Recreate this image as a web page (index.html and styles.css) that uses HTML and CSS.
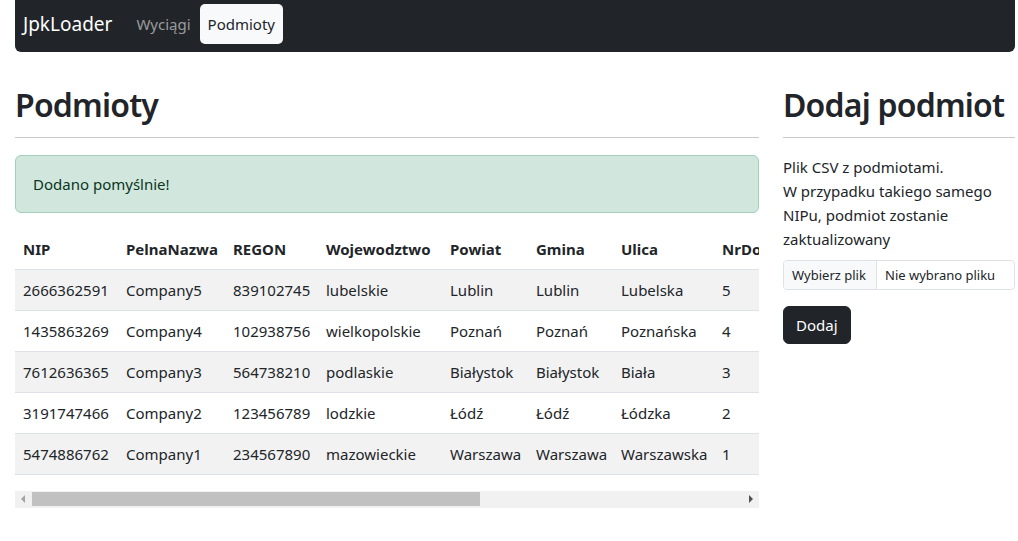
FILE: index.html
```html
<!DOCTYPE html>
<html lang="pl">
<head>
<meta charset="utf-8">
<title>JpkLoader - Podmioty</title>
<link rel="stylesheet" href="styles.css">
</head>
<body>
<div class="page">
  <nav class="navbar">
    <a class="brand" href="#">JpkLoader</a>
    <ul class="nav">
      <li><a class="nav-link" href="#">Wyciągi</a></li>
      <li><a class="nav-link active" href="#">Podmioty</a></li>
    </ul>
  </nav>
  <div class="row">
    <main class="col-main">
      <h1 class="title">Podmioty</h1>
      <hr class="rule">
      <div class="alert">Dodano pomyślnie!</div>
      <div class="table-responsive">
        <table class="table">
          <thead>
            <tr><th>NIP</th><th>PelnaNazwa</th><th>REGON</th><th>Wojewodztwo</th><th>Powiat</th><th>Gmina</th><th>Ulica</th><th>NrDomu</th></tr>
          </thead>
          <tbody>
            <tr><td>2666362591</td><td>Company5</td><td>839102745</td><td>lubelskie</td><td>Lublin</td><td>Lublin</td><td>Lubelska</td><td>5</td></tr>
            <tr><td>1435863269</td><td>Company4</td><td>102938756</td><td>wielkopolskie</td><td>Poznań</td><td>Poznań</td><td>Poznańska</td><td>4</td></tr>
            <tr><td>7612636365</td><td>Company3</td><td>564738210</td><td>podlaskie</td><td>Białystok</td><td>Białystok</td><td>Biała</td><td>3</td></tr>
            <tr><td>3191747466</td><td>Company2</td><td>123456789</td><td>lodzkie</td><td>Łódź</td><td>Łódź</td><td>Łódzka</td><td>2</td></tr>
            <tr><td>5474886762</td><td>Company1</td><td>234567890</td><td>mazowieckie</td><td>Warszawa</td><td>Warszawa</td><td>Warszawska</td><td>1</td></tr>
          </tbody>
        </table>
      </div>
      <div class="hscroll">
        <span class="arrow arrow-left"></span>
        <span class="track"><span class="thumb"></span></span>
        <span class="arrow arrow-right"></span>
      </div>
    </main>
    <aside class="col-side">
      <h1 class="title">Dodaj podmiot</h1>
      <hr class="rule">
      <p class="help">Plik CSV z podmiotami.<br>W przypadku takiego samego NIPu, podmiot zostanie zaktualizowany</p>
      <div class="file-input">
        <span class="file-btn">Wybierz plik</span>
        <span class="file-name">Nie wybrano pliku</span>
      </div>
      <button class="btn-dark" type="button">Dodaj</button>
    </aside>
  </div>
</div>
</body>
</html>
```
FILE: styles.css
```css
* { box-sizing: border-box; }
html, body { margin: 0; padding: 0; }
body {
  font-family: "Noto Sans", "Open Sans", sans-serif;
  font-size: 15px;
  line-height: 24px;
  color: #212529;
  background: #fff;
}
.page {
  width: 1000px;
  margin-left: 15px;
}
.navbar {
  display: flex;
  align-items: center;
  height: 52px;
  padding: 0 8px 4px 8px;
  background: #212529;
  border-radius: 0 0 6px 6px;
}
.brand {
  color: #fff;
  text-decoration: none;
  font-size: 19px;
  line-height: 30px;
  margin-right: 16px;
}
.nav {
  display: flex;
  list-style: none;
  margin: 0;
  padding: 0;
}
.nav-link {
  display: block;
  padding: 8px 8px;
  color: rgba(255,255,255,0.55);
  text-decoration: none;
  border-radius: 5px;
}
.nav-link.active {
  background: #f8f9fa;
  color: #212529;
  margin-left: 1px;
}
.row {
  display: flex;
  gap: 24px;
  margin-top: 31px;
}
.col-main { width: 744px; min-width: 0; }
.col-side { width: 232px; }
.title {
  margin: 0 0 10px 0;
  font-size: 32px;
  font-weight: 600;
  letter-spacing: -0.8px;
  line-height: 44px;
  white-space: nowrap;
}
.rule {
  margin: 0 0 17px 0;
  border: 0;
  border-top: 1px solid #c8c9ca;
}
.alert {
  padding: 16px 17px;
  background: #d1e7dd;
  border: 1px solid #a3cfbb;
  color: #0a3622;
  border-radius: 6px;
  margin-bottom: 16px;
}
.table-responsive { overflow: hidden; }
.table {
  width: 800px;
  table-layout: fixed;
  border-collapse: collapse;
  margin-bottom: 16px;
}
.table th, .table td {
  padding: 8px 8px;
  text-align: left;
  white-space: nowrap;
  border-bottom: 1px solid #dee2e6;
}
.table th { font-weight: 700; }
.table tbody tr:nth-child(odd) { background: #f2f2f2; }
.table th:nth-child(1) { width: 103px; }
.table th:nth-child(2) { width: 107px; }
.table th:nth-child(3) { width: 93px; }
.table th:nth-child(4) { width: 124px; }
.table th:nth-child(5) { width: 86px; }
.table th:nth-child(6) { width: 85px; }
.table th:nth-child(7) { width: 101px; }
.table th:nth-child(8) { width: 101px; }
.hscroll {
  display: flex;
  height: 17px;
  background: #f1f1f1;
}
.arrow {
  width: 17px;
  flex: none;
  position: relative;
}
.arrow::after {
  content: "";
  position: absolute;
  top: 4px;
  width: 0;
  height: 0;
  border-top: 4px solid transparent;
  border-bottom: 4px solid transparent;
}
.arrow-left::after {
  left: 6px;
  border-right: 4px solid #a3a3a3;
}
.arrow-right::after {
  left: 7px;
  border-left: 4px solid #505050;
}
.track {
  flex: 1;
  padding: 1px 0 2px 0;
  display: flex;
}
.thumb {
  width: 448px;
  background: #c1c1c1;
}
.help {
  margin: 0 0 9px 0;
}
.file-input {
  display: flex;
  height: 30px;
  border: 1px solid #dee2e6;
  border-radius: 4px;
  font-size: 13px;
  line-height: 20px;
  overflow: hidden;
  margin-bottom: 16px;
}
.file-btn {
  width: 93px;
  padding: 4px 8px;
  background: #f8f9fa;
  border-right: 1px solid #dee2e6;
  white-space: nowrap;
}
.file-name {
  padding: 4px 8px;
  white-space: nowrap;
}
.btn-dark {
  font-family: inherit;
  font-size: 15px;
  line-height: 24px;
  padding: 6px 12px;
  background: #212529;
  color: #fff;
  border: 1px solid #212529;
  border-radius: 6px;
}
```
